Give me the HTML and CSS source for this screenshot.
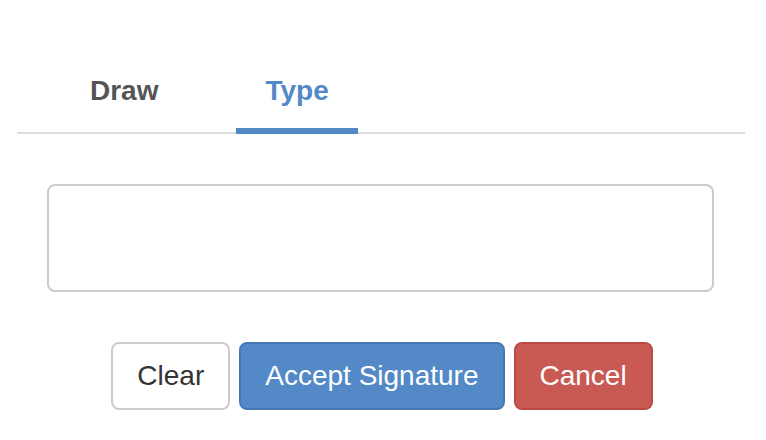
FILE: index.html
```html
<!DOCTYPE html>
<html>
<head>
<meta charset="utf-8">
<link rel="stylesheet" href="styles.css">
</head>
<body>
<div class="panel">
  <nav class="tabs">
    <a class="tab">Draw</a>
    <a class="tab active">Type</a>
  </nav>
  <div class="sig-box"></div>
  <div class="actions">
    <button class="btn btn-default">Clear</button>
    <button class="btn btn-primary">Accept Signature</button>
    <button class="btn btn-danger">Cancel</button>
  </div>
</div>
</body>
</html>
```

FILE: styles.css
```css
html, body {
  margin: 0;
  padding: 0;
  background: #fff;
}
body {
  font-family: "Liberation Sans", Arial, sans-serif;
  color: #333;
}
.panel {
  padding: 50px 21px 0 17px;
}
.tabs {
  display: flex;
  gap: 48px;
  padding-left: 43px;
  border-bottom: 2px solid #dddddd;
}
.tab {
  font-size: 28px;
  line-height: 40px;
  font-weight: bold;
  color: #555555;
  padding: 21px 30px 17px;
  border-bottom: 6px solid transparent;
  margin-bottom: -2px;
}
.tab.active {
  padding-left: 29px;
  padding-right: 29px;
  color: #5289c6;
  border-bottom-color: #5289c6;
}
.sig-box {
  margin: 50px 31px 0 30px;
  height: 104px;
  border: 2px solid #cccccc;
  border-radius: 8px;
}
.actions {
  display: flex;
  justify-content: center;
  gap: 9px;
  margin-top: 50px;
  padding-left: 2px;
}
.btn {
  font-family: "Liberation Sans", Arial, sans-serif;
  font-size: 28px;
  line-height: 40px;
  padding: 12px 24px;
  border: 2px solid transparent;
  border-radius: 8px;
  margin: 0;
}
.btn-default {
  background: #fff;
  color: #333;
  border-color: #cccccc;
}
.btn-primary {
  background: #5289c6;
  color: #fff;
  border-color: #4479b6;
}
.btn-danger {
  background: #c95a53;
  color: #fff;
  border-color: #bb4a44;
}
```
